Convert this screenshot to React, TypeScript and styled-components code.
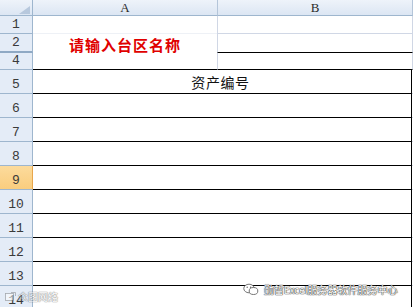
import React from 'react';
import styled, { createGlobalStyle } from 'styled-components';

const Global = createGlobalStyle`
  html, body { margin: 0; padding: 0; background: #fff; overflow: hidden; }
  body { font-family: "Noto Sans CJK SC", sans-serif; }
`;

const Sheet = styled.div`
  position: relative;
  width: 413px;
  height: 307px;
  overflow: hidden;
  display: flex;
  flex-direction: column;
  background: #fff;
`;

const HeadRow = styled.div`
  display: grid;
  grid-template-columns: 33px 185px 195px;
  height: 16px;
  flex: none;
`;

const Corner = styled.div`
  box-sizing: border-box;
  background: linear-gradient(#eef3fa, #dce6f3);
  border-right: 1px solid #9eb6ce;
  border-bottom: 1px solid #9eb6ce;
  display: flex;
  justify-content: flex-end;
  align-items: flex-end;
  padding: 0 2px 1px 0;
`;

const ColHead = styled.div`
  box-sizing: border-box;
  background: linear-gradient(#eef3fa, #dce6f3);
  border-right: 1px solid #b4c5d9;
  border-bottom: 1px solid #9eb6ce;
  display: flex;
  align-items: center;
  justify-content: center;
  font-family: "Liberation Serif", serif;
  font-size: 13px;
  color: #2a2a2a;
  line-height: 1;
`;

const Row = styled.div<{ $h: number }>`
  display: grid;
  grid-template-columns: 33px 1fr;
  height: ${(p) => p.$h}px;
  flex: none;
`;

const RowHead = styled.div<{ $active?: boolean; $double?: boolean }>`
  box-sizing: border-box;
  background: ${(p) => (p.$active ? 'linear-gradient(#fcdb9c, #f9cd7e)' : '#e4ecf7')};
  border-right: 1px solid ${(p) => (p.$active ? '#e8a64c' : '#9eb6ce')};
  border-bottom: ${(p) => (p.$double ? '2px double #8fa9c4' : '1px solid #9eb6ce')};
  display: flex;
  align-items: flex-end;
  justify-content: center;
  padding-bottom: 2px;
  font-family: "Liberation Mono", monospace;
  font-size: 13px;
  line-height: 1;
  color: #3a3a3a;
`;

const TopBody = styled.div`
  display: grid;
  grid-template-columns: 184px 1fr;
`;

const CellA = styled.div<{ $bottom?: string }>`
  box-sizing: border-box;
  border-bottom: ${(p) => (p.$bottom ? `1px solid ${p.$bottom}` : 'none')};
  display: flex;
  align-items: center;
  justify-content: center;
`;

const CellB = styled.div<{ $bottom: string }>`
  box-sizing: border-box;
  border-left: 1px solid #d0d7e5;
  border-right: 1px solid #d0d7e5;
  border-bottom: 1px solid ${(p) => p.$bottom};
`;

const PromptText = styled.span`
  font-family: "Noto Sans CJK SC", sans-serif;
  font-weight: 700;
  font-size: 15px;
  letter-spacing: 1px;
  color: #e00000;
  line-height: 1;
  margin-top: 1px;
`;

const BodyWrap = styled.div`
  display: grid;
  grid-template-columns: 1fr 1px;
`;

const Merged = styled.div`
  box-sizing: border-box;
  border-bottom: 1px solid #000;
  border-right: 1px solid #000;
  display: flex;
  align-items: center;
  justify-content: center;
`;

const EdgeTick = styled.div`
  box-sizing: border-box;
  border-bottom: 1px solid #d0d7e5;
`;

const TitleText = styled.span`
  font-family: "Noto Sans CJK SC", sans-serif;
  font-size: 14px;
  letter-spacing: 0.6px;
  color: #111;
  line-height: 1;
  margin-right: 3px;
`;

const Watermark = styled.div<{ $left: number; $top: number }>`
  position: absolute;
  left: ${(p) => p.$left}px;
  top: ${(p) => p.$top}px;
  display: flex;
  align-items: center;
  gap: 5px;
  font-family: "Noto Sans CJK SC", sans-serif;
  font-size: 10px;
  line-height: 1;
  color: #ffffff;
  text-shadow: 0 0 1px #333, 0 0 1px #333, 0 0 1px #555;
  white-space: nowrap;
`;

const FaintMark = styled(Watermark)`
  opacity: 0.5;
  gap: 2px;
`;

const WeChatIcon = () => (
  <svg width="16" height="13" viewBox="0 0 16 13">
    <ellipse cx="6" cy="5.5" rx="5.2" ry="4.3" fill="#fff" stroke="#666" strokeWidth="0.9" />
    <ellipse cx="10.5" cy="8" rx="4.3" ry="3.5" fill="#fff" stroke="#666" strokeWidth="0.9" />
    <circle cx="4.2" cy="4.3" r="0.7" fill="#666" />
    <circle cx="7.6" cy="4.3" r="0.7" fill="#666" />
  </svg>
);

const SmallIcon = () => (
  <svg width="11" height="10" viewBox="0 0 11 10">
    <rect x="0.5" y="1.5" width="8" height="7" fill="#fff" stroke="#666" strokeWidth="0.8" />
    <path d="M6 0.5 L10.5 0.5 L10.5 4" fill="none" stroke="#666" strokeWidth="0.8" />
  </svg>
);

const dataRows = [
  { label: '5', title: '资产编号' },
  { label: '6' },
  { label: '7' },
  { label: '8' },
  { label: '9', active: true },
  { label: '10' },
  { label: '11' },
  { label: '12' },
  { label: '13' },
  { label: '14' },
];

export default function App() {
  return (
    <>
      <Global />
      <Sheet>
        <HeadRow>
          <Corner>
            <svg width="11" height="8" viewBox="0 0 11 8">
              <polygon points="11,0 11,8 0,8" fill="#b7c8dd" />
            </svg>
          </Corner>
          <ColHead>A</ColHead>
          <ColHead>B</ColHead>
        </HeadRow>

        <Row $h={18}>
          <RowHead>1</RowHead>
          <TopBody>
            <CellA $bottom="#eef1f6" />
            <CellB $bottom="#d0d7e5" />
          </TopBody>
        </Row>

        <Row $h={19}>
          <RowHead $double>2</RowHead>
          <TopBody>
            <CellA>
              <PromptText>请输入台区名称</PromptText>
            </CellA>
            <CellB $bottom="#000" />
          </TopBody>
        </Row>

        <Row $h={17}>
          <RowHead>4</RowHead>
          <TopBody>
            <CellA $bottom="#000" />
            <CellB $bottom="#000" />
          </TopBody>
        </Row>

        {dataRows.map((r) => (
          <Row key={r.label} $h={24}>
            <RowHead $active={r.active}>{r.label}</RowHead>
            <BodyWrap>
              <Merged>{r.title && <TitleText>{r.title}</TitleText>}</Merged>
              <EdgeTick />
            </BodyWrap>
          </Row>
        ))}

        <FaintMark $left={5} $top={292}>
          <SmallIcon />
          <span>众图网络</span>
        </FaintMark>

        <Watermark $left={243} $top={283}>
          <WeChatIcon />
          <span>勤哲Excel服务器软件服务中心</span>
        </Watermark>
      </Sheet>
    </>
  );
}
